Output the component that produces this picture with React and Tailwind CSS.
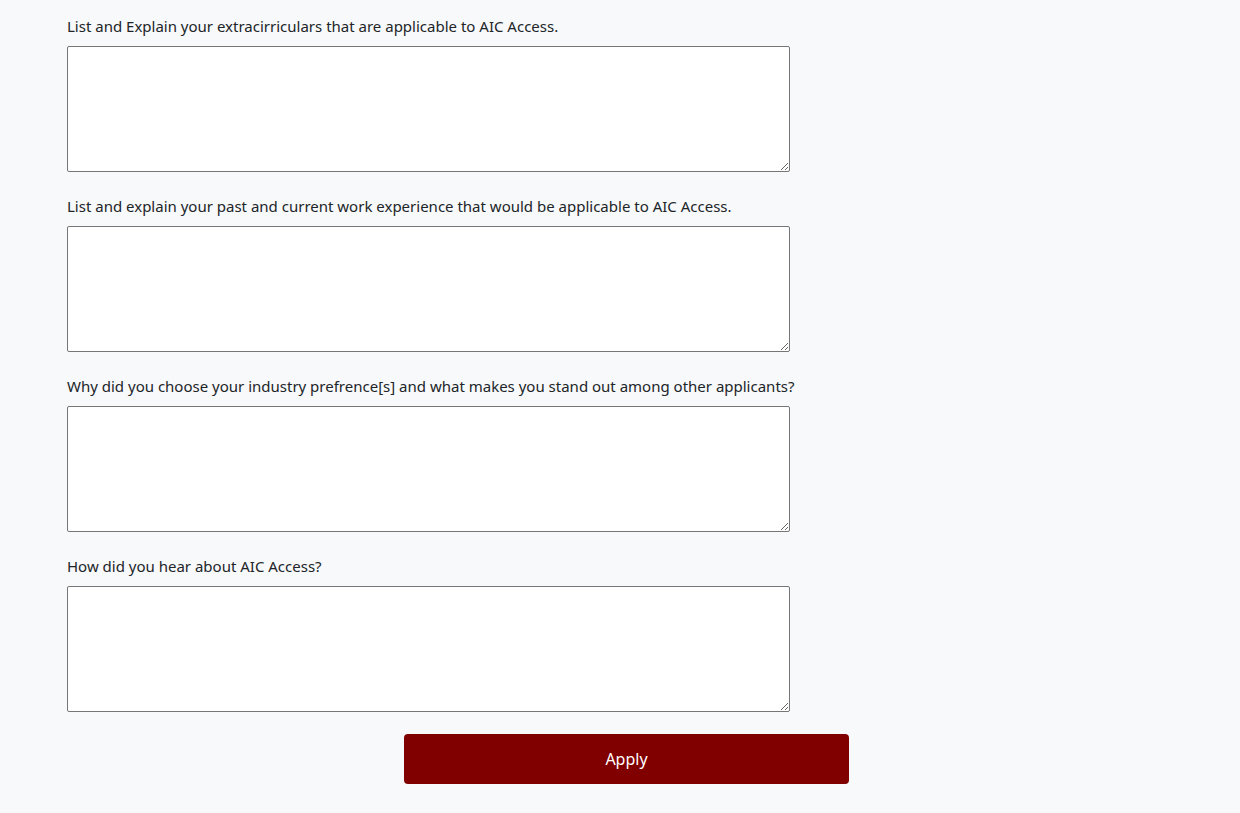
import React from 'react';

const QUESTIONS = [
  'List and Explain your extracirriculars that are applicable to AIC Access.',
  'List and explain your past and current work experience that would be applicable to AIC Access.',
  'Why did you choose your industry prefrence[s] and what makes you stand out among other applicants?',
  'How did you hear about AIC Access?'
];

export default function App() {
  return (
    <div
      className="min-h-[813px] bg-[#f8f9fa] pt-[14px] text-[#212529]"
      style={{ fontFamily: '"Noto Sans", "Open Sans", sans-serif' }}
    >
      <form className="ml-[67px] w-[1119px]" onSubmit={e => e.preventDefault()}>
        {QUESTIONS.map((q, i) => (
          <div key={i} className="mb-[22px]">
            <label className="block text-[15px] leading-[24px] mb-[8px]">{q}</label>
            <textarea className="block w-[723px] h-[126px] bg-white border border-[#767676] rounded-[2px] p-1 text-[15px]" />
          </div>
        ))}
        <button
          type="submit"
          className="block mx-auto w-[445px] h-[50px] rounded-[4px] bg-[#800000] text-white text-[16px]"
        >
          Apply
        </button>
      </form>
    </div>
  );
}
